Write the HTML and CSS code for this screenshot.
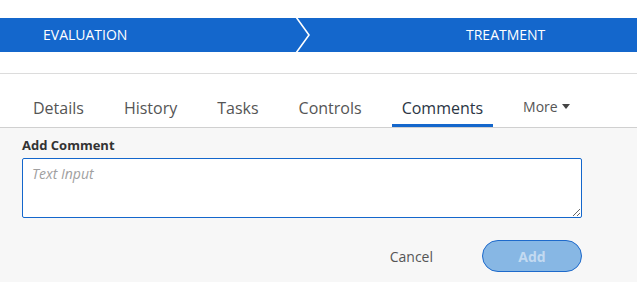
FILE: index.html
```html
<!DOCTYPE html>
<html lang="en">
<head>
    <meta charset="UTF-8">
    <meta name="viewport" content="width=device-width, initial-scale=1.0">
    <title>Comments</title>
    <link rel="stylesheet" href="styles.css">
</head>
<body>
    <div class="stepper">
        <div class="step step-first">EVALUATION</div>
        <svg class="chevron" width="18" height="34" viewBox="0 0 18 34">
            <path d="M2 -1 L15 17 L2 35" fill="none" stroke="#fff" stroke-width="1.6"/>
        </svg>
        <div class="step step-second">TREATMENT</div>
    </div>

    <div class="spacer"></div>

    <nav class="tabs">
        <a class="tab">Details</a>
        <a class="tab">History</a>
        <a class="tab">Tasks</a>
        <a class="tab">Controls</a>
        <a class="tab active">Comments</a>
        <a class="tab more">More <span class="caret"></span></a>
    </nav>

    <section class="panel">
        <label class="label" for="comment">Add Comment</label>
        <textarea id="comment" class="comment-box" placeholder="Text Input" autofocus></textarea>
        <div class="actions">
            <button class="btn-cancel">Cancel</button>
            <button class="btn-add" disabled>Add</button>
        </div>
    </section>
</body>
</html>
```

FILE: styles.css
```css
body {
    font-family: "Open Sans", "Liberation Sans", sans-serif;
    background-color: #fff;
    margin: 0;
    padding: 0;
    overflow: hidden;
}
.stepper {
    display: flex;
    align-items: center;
    margin-top: 18px;
    height: 34px;
    background-color: #1467cc;
    color: #fff;
    font-size: 14px;
}
.step {
    line-height: 34px;
}
.step-first {
    width: 251px;
    padding-left: 43px;
}
.chevron {
    display: block;
    flex: none;
}
.step-second {
    flex: 1;
    padding-left: 154px;
}
.spacer {
    height: 21px;
    border-bottom: 1px solid #dcdcdc;
}
.tabs {
    display: flex;
    align-items: flex-end;
    gap: 20px;
    padding-left: 23px;
    height: 53px;
    border-bottom: 1px solid #d0d0d0;
}
.tab {
    padding: 0 10px 5px;
    font-size: 16px;
    line-height: 22px;
    color: #555;
    border-bottom: 3px solid transparent;
    cursor: pointer;
}
.tab.active {
    color: #2b3644;
    border-bottom-color: #1467cc;
}
.tab.more {
    font-size: 14px;
    padding-bottom: 6px;
}
.caret {
    display: inline-block;
    width: 0;
    height: 0;
    margin-left: 1px;
    vertical-align: 3px;
    border-left: 4px solid transparent;
    border-right: 4px solid transparent;
    border-top: 5px solid #444;
}
.panel {
    background-color: #f7f7f7;
    padding: 8px 55px 10px 22px;
}
.label {
    display: block;
    font-size: 13px;
    font-weight: 700;
    color: #333;
    line-height: 18px;
    margin-bottom: 4px;
}
.comment-box {
    display: block;
    box-sizing: border-box;
    width: 560px;
    height: 60px;
    margin: 0;
    padding: 5px 9px;
    border: 1px solid #1467cc;
    border-radius: 2px;
    background: #fff;
    font-family: inherit;
    font-size: 14px;
    color: #333;
    outline: none;
}
.comment-box::placeholder {
    color: #a0a0a0;
    font-style: italic;
}
.actions {
    display: flex;
    justify-content: flex-end;
    align-items: center;
    margin-top: 22px;
}
.btn-cancel {
    background: none;
    border: none;
    padding: 0;
    margin-right: 49px;
    font-family: inherit;
    font-size: 14px;
    color: #555;
}
.btn-add {
    width: 100px;
    height: 32px;
    border: 1px solid #1e6acb;
    border-radius: 16px;
    background-color: #87b7e4;
    color: #c3daf1;
    font-family: inherit;
    font-size: 14px;
    font-weight: 700;
}
```
